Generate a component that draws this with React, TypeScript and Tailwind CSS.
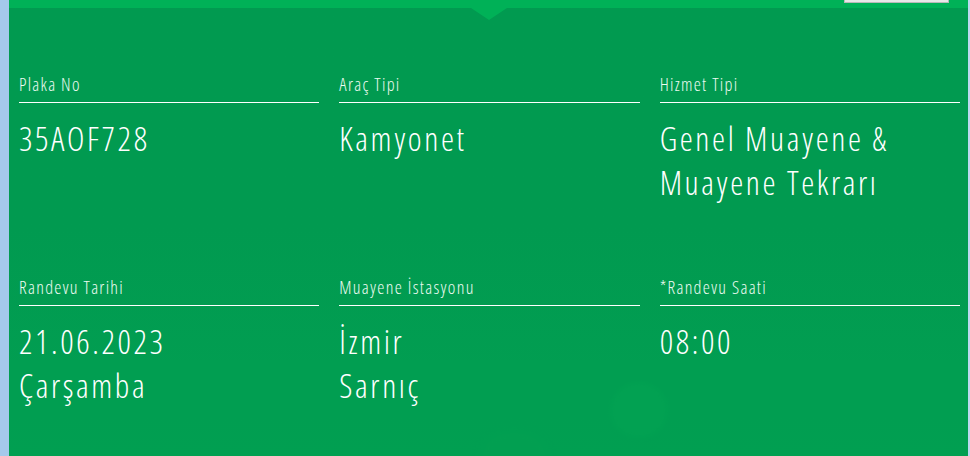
type Field = {
  label: string
  lines: string[]
}

const fields: Field[] = [
  { label: "Plaka No", lines: ["35AOF728"] },
  { label: "Araç Tipi", lines: ["Kamyonet"] },
  { label: "Hizmet Tipi", lines: ["Genel Muayene &", "Muayene Tekrarı"] },
  { label: "Randevu Tarihi", lines: ["21.06.2023", "Çarşamba"] },
  { label: "Muayene İstasyonu", lines: ["İzmir", "Sarnıç"] },
  { label: "*Randevu Saati", lines: ["08:00"] },
]

export default function App() {
  return (
    <div className="flex w-[970px] h-[456px] overflow-hidden bg-[#a5c9eb] font-['Open_Sans',sans-serif] font-stretch-condensed">
      {/* Left blue strip */}
      <div className="w-[9px] shrink-0 bg-[#a5c9eb]" />

      {/* Green panel */}
      <div className="relative flex-1 flex flex-col overflow-hidden bg-gradient-to-b from-[#019a50] via-[#019a50] to-[#02a052]">
        {/* decorative blobs */}
        <div className="absolute left-[601px] top-[382px] h-[56px] w-[58px] rounded-full bg-[#03a553] blur-[2px]" />
        <div className="absolute left-[470px] top-[430px] h-[60px] w-[70px] rounded-full bg-[#03a152] blur-[3px]" />
        <div className="absolute left-0 right-0 top-[360px] h-[96px] bg-[#029f52]/60" />

        {/* Top strip + notch */}
        <div className="relative h-2 shrink-0 bg-[#00b157]" />
        <div className="absolute left-[462px] top-2 h-0 w-0 border-l-[18px] border-r-[18px] border-t-[12px] border-l-transparent border-r-transparent border-t-[#00b157]" />
        <div className="absolute left-[835px] top-0 h-[3px] w-[105px] border border-t-0 border-[#b9b9b9] bg-[#e8e8e8]" />

        {/* Fields */}
        <div className="relative grid grid-cols-3 gap-x-5 gap-y-[72px] pl-[10px] pr-[8px] pt-[66px]">
          {fields.map(field => (
            <div key={field.label} className="flex flex-col">
              <div className="border-b border-white pb-2 text-[18px] leading-[20px] font-light tracking-[1.3px] text-[#eefbf2]">
                {field.label}
              </div>
              <div className="mt-[14px] min-h-[88px] text-[33px] leading-[44px] font-light tracking-[2.6px] text-white">
                {field.lines.map(line => (
                  <div key={line}>{line}</div>
                ))}
              </div>
            </div>
          ))}
        </div>
      </div>

      {/* Right edge */}
      <div className="w-[2px] shrink-0 bg-[#bcd9f0]" />
    </div>
  )
}
